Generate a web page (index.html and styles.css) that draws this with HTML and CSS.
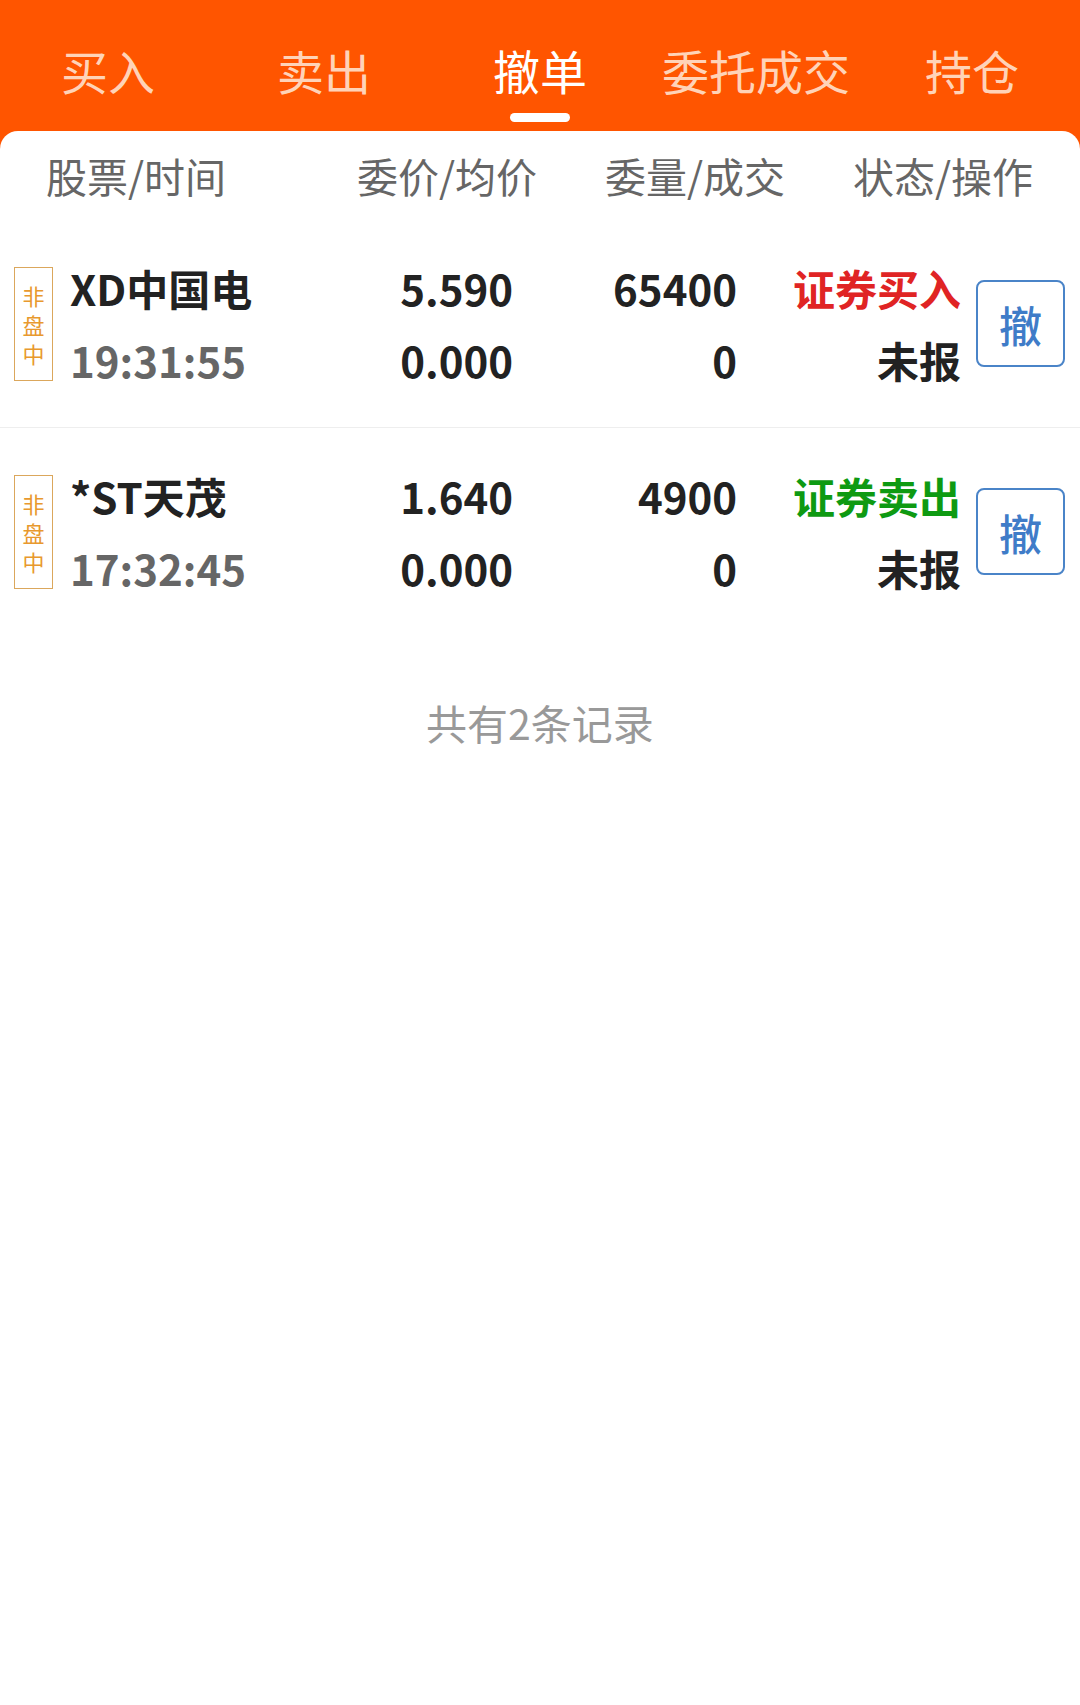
FILE: index.html
```html
<!DOCTYPE html>
<html lang="zh-CN">
<head>
  <meta charset="UTF-8">
  <meta name="viewport" content="width=device-width, initial-scale=1.0">
  <title>撤单</title>
  <link rel="stylesheet" href="styles.css">
</head>
<body>

<header class="top">
  <nav class="tabs">
    <div class="tab">买入</div>
    <div class="tab">卖出</div>
    <div class="tab active">撤单</div>
    <div class="tab">委托成交</div>
    <div class="tab">持仓</div>
  </nav>
</header>

<section class="card">
  <div class="head">
    <span class="h-first">股票/时间</span>
    <span>委价/均价</span>
    <span>委量/成交</span>
    <span>状态/操作</span>
  </div>

  <div class="order">
    <div class="badge">非<br>盘<br>中</div>
    <div class="cell name">
      <div>XD中国电</div>
      <div class="time">19:31:55</div>
    </div>
    <div class="cell num">
      <div>5.590</div>
      <div>0.000</div>
    </div>
    <div class="cell num">
      <div>65400</div>
      <div>0</div>
    </div>
    <div class="cell num status">
      <div class="buy">证券买入</div>
      <div>未报</div>
    </div>
    <button class="cancel">撤</button>
  </div>

  <div class="order">
    <div class="badge">非<br>盘<br>中</div>
    <div class="cell name">
      <div>*ST天茂</div>
      <div class="time">17:32:45</div>
    </div>
    <div class="cell num">
      <div>1.640</div>
      <div>0.000</div>
    </div>
    <div class="cell num">
      <div>4900</div>
      <div>0</div>
    </div>
    <div class="cell num status">
      <div class="sell">证券卖出</div>
      <div>未报</div>
    </div>
    <button class="cancel">撤</button>
  </div>

  <p class="total">共有2条记录</p>
</section>

</body>
</html>
```

FILE: styles.css
```css
body {
  margin: 0;
  padding: 0;
  background-color: #fff;
  font-family: "Noto Sans CJK SC", "Noto Sans", sans-serif;
}
.top {
  background-color: #ff5500;
  padding: 40px 0 29px;
}
.tabs {
  display: grid;
  grid-template-columns: repeat(5, 1fr);
}
.tab {
  text-align: center;
  font-size: 47px;
  line-height: 60px;
  color: #ffd3b8;
  padding-bottom: 22px;
}
.tab.active {
  color: #fff;
  padding-bottom: 0;
}
.tab.active::after {
  content: "";
  display: block;
  width: 60px;
  height: 9px;
  margin: 13px auto 0;
  border-radius: 5px;
  background-color: #fff;
}
.card {
  margin-top: -20px;
  background-color: #fff;
  border-radius: 18px 18px 0 0;
}
.head {
  display: grid;
  grid-template-columns: 289px 248px 248px 248px;
  height: 89px;
  line-height: 89px;
  font-size: 41px;
  color: #666;
  text-align: right;
}
.head .h-first {
  text-align: left;
  padding-left: 46px;
}
.order {
  display: grid;
  grid-template-columns: 39px 236px 224px 224px 239px 89px;
  align-items: center;
  height: 207px;
  padding: 0 15px 0 14px;
  border-bottom: 1px solid #eee;
}
.order:last-of-type {
  border-bottom: none;
}
.badge {
  box-sizing: border-box;
  height: 114px;
  padding-top: 13px;
  border: 1.5px solid #dba75c;
  color: #e8992e;
  font-size: 22px;
  line-height: 29px;
  text-align: center;
}
.cell {
  font-size: 42px;
  font-weight: bold;
  line-height: 72px;
  color: #222;
}
.name {
  padding-left: 17px;
  white-space: nowrap;
}
.time {
  color: #666;
}
.num {
  text-align: right;
}
.status {
  margin-right: 15px;
}
.buy {
  color: #e02424;
}
.sell {
  color: #0e9a12;
}
.cancel {
  box-sizing: border-box;
  width: 89px;
  height: 87px;
  padding: 0;
  background-color: #fff;
  border: 2px solid #4a84c8;
  border-radius: 8px;
  color: #3f7cc8;
  font-family: "Noto Sans CJK SC", sans-serif;
  font-size: 43px;
  font-weight: 500;
}
.total {
  margin: 0;
  padding-top: 57px;
  line-height: 60px;
  text-align: center;
  font-size: 41px;
  color: #999;
}
```
